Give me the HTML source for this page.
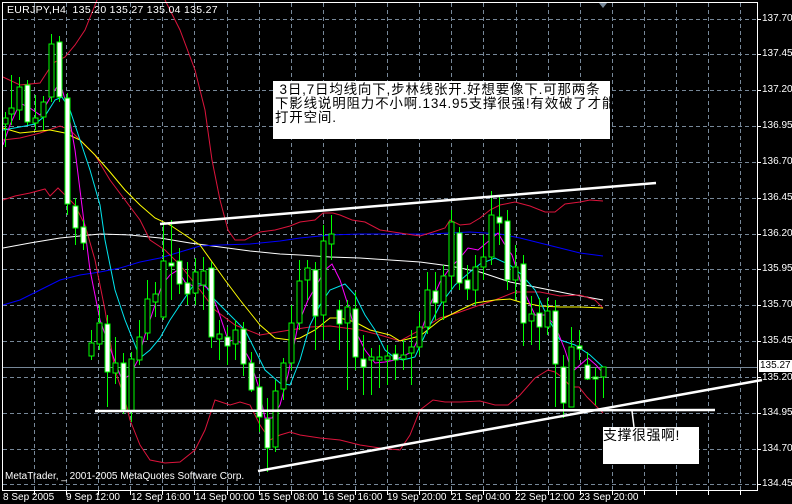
<!DOCTYPE html>
<html><head><meta charset="utf-8"><style>
body{margin:0;background:#000;width:792px;height:504px;overflow:hidden;position:relative;font-family:"Liberation Sans","Noto Sans CJK SC",sans-serif}
.t{position:absolute;color:#fff;font-size:10px;white-space:nowrap;line-height:12px}
.r{position:absolute;left:762px;color:#fff;font-size:10px;line-height:12px}
.b{position:absolute;top:492px;color:#fff;font-size:10px;line-height:12px;white-space:nowrap}
.box{position:absolute;background:#fff;color:#000;font-family:"Liberation Sans","WenQuanYi Zen Hei","Noto Sans CJK SC",sans-serif;font-size:13px;line-height:14px;white-space:nowrap}
svg{position:absolute;left:0;top:0}
</style></head><body>
<svg id="s" width="792" height="504" xmlns="http://www.w3.org/2000/svg"></svg>
<div class="t" style="left:7px;top:4px;font-size:10.5px;letter-spacing:0.3px">EURJPY,H4&nbsp; 135.20 135.27 135.04 135.27</div>
<div class="t" style="left:5px;top:471px">MetaTrader, _ 2001-2005 MetaQuotes Software Corp.</div>
<div class="box" style="left:273px;top:81px;width:335px;height:56px;padding:2px 0 0 2px;font-size:13.5px;letter-spacing:0.8px">&nbsp;3日,7日均线向下,步林线张开.好想要像下.可那两条<br>下影线说明阻力不小啊.134.95支撑很强!有效破了才能<br>打开空间.</div>
<div class="box" style="left:603px;top:427px;width:96px;height:37px;font-size:14px;line-height:16px;letter-spacing:0.5px">支撑很强啊!</div>
<div class="r" style="top:13px">137.70</div>
<div class="r" style="top:48px">137.45</div>
<div class="r" style="top:84px">137.20</div>
<div class="r" style="top:120px">136.95</div>
<div class="r" style="top:156px">136.70</div>
<div class="r" style="top:192px">136.45</div>
<div class="r" style="top:228px">136.20</div>
<div class="r" style="top:263px">135.95</div>
<div class="r" style="top:299px">135.70</div>
<div class="r" style="top:335px">135.45</div>
<div class="r" style="top:372px">135.20</div>
<div class="r" style="top:407px">134.95</div>
<div class="r" style="top:443px">134.70</div>
<div class="r" style="top:478px">134.45</div>
<div class="r" style="top:360px;left:759px;background:#fff;color:#000;width:32px;height:12px;padding-left:1px">135.27</div>
<div class="b" style="left:3px">8 Sep 2005</div>
<div class="b" style="left:66px">9 Sep 12:00</div>
<div class="b" style="left:131px">12 Sep 16:00</div>
<div class="b" style="left:195px">14 Sep 00:00</div>
<div class="b" style="left:259px">15 Sep 08:00</div>
<div class="b" style="left:323px">16 Sep 16:00</div>
<div class="b" style="left:387px">19 Sep 20:00</div>
<div class="b" style="left:451px">21 Sep 04:00</div>
<div class="b" style="left:515px">22 Sep 12:00</div>
<div class="b" style="left:579px">23 Sep 20:00</div>
<script>
var s=document.getElementById('s'),h='';
function L(x1,y1,x2,y2,c,w,d){h+='<line x1="'+x1+'" y1="'+y1+'" x2="'+x2+'" y2="'+y2+'" stroke="'+c+'" stroke-width="'+(w||1)+'"'+(d?' stroke-dasharray="'+d+'"':'')+'/>';}
function P(pts,c,w){h+='<polyline fill="none" stroke="'+c+'" stroke-width="'+(w||1)+'" points="'+pts.join(' ')+'"/>';}
var ys=[19,54,90,126,162,198,234,269,305,341,377,413,449,484];
ys.forEach(function(y){L(3,y+.5,757,y+.5,'#778899',1,'4 3');L(757,y+.5,761,y+.5,'#fff');});
for(var x=34;x<757;x+=32.1){var xx=Math.round(x)+.5;L(xx,3,xx,490,'#778899',1,'4 3');L(xx,490,xx,495,'#fff');}
L(3,367.5,757,367.5,'#778899');
P([3,248,30,243,60,238,80,236,100,234,130,235,160,238,190,243,220,247,250,251,280,254,300,255,330,257,360,258,390,260,420,262,450,266,480,272,510,282,540,288,570,294,603,300],'#fff');
P([3,305,20,300,40,290,60,280,80,275,100,272,120,268,140,262,160,258,180,252,200,246,220,245,250,244,280,241,300,238,330,235,360,234,400,234,430,234,470,232,500,234,520,238,540,243,560,248,580,253,603,256],'#0000ff');
P([165,0,180,30,195,70,205,110,212,160,220,200,228,230,235,240,245,240,260,232,275,230,290,226,300,222,315,220,323,213,333,213,340,215,352,220,365,222,380,230,400,233,420,236,433,232,445,228,450,220,460,225,470,224,480,218,490,210,500,205,515,202,530,206,545,212,555,212,565,204,580,202,590,200,603,201],'#dc143c');
P([3,77,20,85,40,83,53,63,65,57,75,45,85,30,97,0],'#dc143c');
P([3,140,20,138,40,133,60,126,70,130,80,140,95,155,110,180,125,200,140,220,150,240,165,250,180,265,200,290,215,310,235,325,260,335,290,330,310,327,330,326,360,330,380,335,400,341,420,330,440,318,460,312,480,305,495,300,515,292,540,292,560,296,580,295,595,300,603,308],'#dc143c');
P([3,200,15,196,30,193,45,189,50,196,58,188,65,195,75,205,85,225,95,260,105,310,115,370,125,400,130,420,140,445,150,460,165,463,180,462,195,450,205,430,215,400,230,405,240,402,250,405,260,425,270,440,280,435,290,432,300,435,320,438,340,440,360,445,380,448,400,450,410,435,420,410,433,400,445,402,460,402,480,401,495,405,508,405,520,395,535,378,548,370,555,372,563,378,571,387,579,387,587,397,597,407,603,413],'#dc143c');
P([3,128,20,133,40,131,50,130,65,133,80,140,95,155,110,172,125,190,140,205,155,218,170,225,200,245,225,280,240,300,260,325,275,338,290,340,300,338,315,330,330,318,340,318,355,322,370,330,390,335,400,341,420,336,440,320,460,310,475,303,495,300,510,299,520,302,540,306,560,307,580,307,603,308],'#ffff00');
P([3,130,20,127,35,124,45,116,55,100,62,97,70,110,80,140,90,170,100,205,105,240,110,265,115,290,125,320,135,345,140,358,150,350,160,338,170,320,180,305,195,283,205,285,215,300,230,315,245,330,255,350,265,370,280,383,290,385,300,360,310,325,320,305,330,290,345,284,355,295,365,315,375,330,385,350,395,358,403,360,415,357,425,335,440,305,455,285,470,272,480,264,495,258,510,265,522,275,535,290,548,318,560,340,575,345,590,355,603,367],'#00e5ee');
P([3,145,10,125,20,103,30,108,40,115,50,98,60,82,68,110,75,150,80,190,85,230,90,270,100,320,110,348,122,380,130,375,138,360,145,335,155,305,162,285,170,275,178,270,185,282,195,287,203,285,210,290,218,310,228,340,240,342,250,360,258,385,265,418,272,418,280,405,288,375,298,325,308,300,315,288,325,270,332,264,340,280,348,305,355,330,365,350,375,363,385,362,395,360,403,356,412,352,420,335,430,305,440,282,450,268,460,258,468,248,478,250,490,240,498,233,505,245,512,255,520,280,528,300,535,315,545,315,555,325,565,350,572,372,580,365,588,358,596,365,603,373],'#ff00ff');
var C=[[5,118,124,0,112,147],[11,108,114,0,75,125],[19,87,110,0,77,120],[27,85,122,1,80,125],[35,118,123,0,95,130],[43,102,117,0,96,130],[51,44,97,0,34,102],[59,42,97,1,36,102],[67,98,204,1,93,215],[75,206,228,1,198,245],[83,227,243,1,220,250],[91,343,356,0,330,360],[99,323,344,0,305,350],[107,324,372,1,315,407],[115,363,373,0,337,384],[123,363,410,1,353,414],[131,359,411,0,352,422],[139,337,360,0,320,365],[147,299,333,0,280,340],[155,294,302,0,282,317],[163,261,317,0,222,320],[171,263,266,1,220,300],[179,261,284,1,248,294],[187,283,294,1,262,305],[195,272,293,0,258,305],[203,271,285,0,257,310],[211,268,337,1,262,348],[219,334,339,0,320,360],[227,337,346,1,327,365],[235,330,344,0,320,360],[243,329,364,1,322,376],[251,363,390,1,352,392],[259,387,417,1,378,432],[267,419,448,1,398,472],[275,391,447,0,380,452],[283,363,389,0,358,400],[291,323,363,0,305,370],[299,281,323,0,260,330],[307,268,280,0,260,300],[315,270,316,1,262,350],[323,241,315,0,225,340],[331,234,244,0,215,260],[339,310,324,1,300,350],[347,307,323,0,300,390],[355,309,357,1,292,370],[363,359,367,1,335,395],[371,357,360,0,348,395],[379,357,360,0,345,388],[387,356,360,0,345,385],[395,354,360,1,345,380],[403,355,359,0,340,370],[411,347,353,0,330,385],[419,327,347,0,312,355],[427,290,327,0,272,334],[435,291,303,1,272,320],[443,276,302,0,265,320],[451,222,276,0,210,290],[459,233,283,1,227,290],[467,280,289,1,265,300],[475,267,290,0,255,305],[483,257,267,0,235,280],[491,215,257,0,191,265],[499,217,223,1,197,245],[507,221,280,1,210,290],[515,267,280,0,245,300],[523,264,323,1,255,346],[531,314,321,0,296,345],[539,313,327,1,298,350],[547,311,327,0,298,335],[555,311,364,1,300,407],[563,367,403,1,355,418],[571,347,407,0,327,407],[579,346,349,1,330,360],[587,365,379,1,352,380],[595,377,379,1,368,405],[603,367,377,0,367,398]];
C.forEach(function(c){var x=c[0]+.5;L(x,c[4],x,c[5],'#00ff00');
h+='<rect x="'+(c[0]-2)+'" y="'+c[1]+'" width="5" height="'+Math.max(2,c[2]-c[1])+'" fill="'+(c[3]?'#fff':'#000')+'" stroke="#00ff00" stroke-width="1"/>';});
L(160,224,656,183,'#fff',2.5);
L(95,411,715,410,'#fff',2.5);
L(258,471,762,380,'#fff',2.5);
L(632,411,634,427,'#fff',1.5);
h+='<rect x="2.5" y="2.5" width="755" height="488" fill="none" stroke="#fff"/>';
h+='<polygon points="599,3 607,3 603,8" fill="#778899"/>';
s.innerHTML=h;
</script>
</body></html>
